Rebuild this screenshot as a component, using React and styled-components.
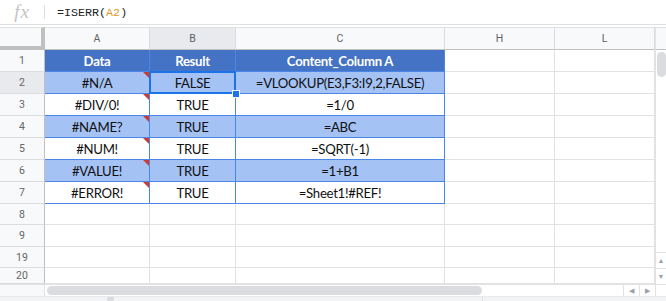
import React from "react";
import styled, { createGlobalStyle, css } from "styled-components";

const Global = createGlobalStyle`
  html, body { margin: 0; padding: 0; background: #fff; }
  body { width: 666px; height: 301px; overflow: hidden; }
`;

const COLS = [105, 86, 209, 110, 100];
const COL_LABELS = ["A", "B", "C", "H", "L"];
const ROW_H = [22, 22, 22, 22, 22, 22, 22, 21, 22, 21, 16];
const ROW_LABELS = ["1", "2", "3", "4", "5", "6", "7", "8", "9", "19", "20"];

const TABLE = [
  ["#N/A", "FALSE", "=VLOOKUP(E3,F3:I9,2,FALSE)"],
  ["#DIV/0!", "TRUE", "=1/0"],
  ["#NAME?", "TRUE", "=ABC"],
  ["#NUM!", "TRUE", "=SQRT(-1)"],
  ["#VALUE!", "TRUE", "=1+B1"],
  ["#ERROR!", "TRUE", "=Sheet1!#REF!"],
];

const Page = styled.div`
  width: 666px;
  height: 301px;
  display: flex;
  flex-direction: column;
  overflow: hidden;
  background: #fff;
  font-family: "Liberation Sans", Arial, sans-serif;
`;

const FormulaBar = styled.div`
  height: 24px;
  flex: none;
  display: flex;
  align-items: center;
  border-bottom: 1px solid #e0e0e0;
`;

const FxBox = styled.div`
  width: 44px;
  height: 14px;
  display: flex;
  align-items: center;
  justify-content: center;
  border-right: 1px solid #dadce0;
  font-family: "Liberation Serif", "Times New Roman", serif;
  font-style: italic;
  font-size: 19px;
  color: #c4c4c4;
  letter-spacing: 1px;
`;

const FormulaText = styled.div`
  padding-left: 12px;
  font-family: "Liberation Mono", "DejaVu Sans Mono", monospace;
  font-size: 11.7px;
  color: #222;
  padding-top: 1px;
`;

const Ref = styled.span`
  color: #e69a28;
`;

const Gap = styled.div`
  height: 2px;
  flex: none;
`;

const Body = styled.div`
  display: flex;
  flex: none;
  height: 257px;
`;

const Grid = styled.div`
  display: grid;
  grid-template-columns: 45px ${COLS.map((c) => c + "px").join(" ")};
  grid-template-rows: 23px ${ROW_H.map((r) => r + "px").join(" ")};
  width: 655px;
  overflow: hidden;
`;

const Corner = styled.div`
  background: #f8f9fa;
  border-top: 1px solid #e2e2e2;
  border-right: 4px solid #c0c0c0;
  border-bottom: 4px solid #c0c0c0;
  box-sizing: border-box;
`;

const ColHeader = styled.div`
  background: ${(p) => (p.$selected ? "#e8eaed" : "#f8f9fa")};
  border-top: 1px solid #e2e2e2;
  border-right: 1px solid #dadce0;
  border-bottom: 1px solid #c0c0c0;
  box-sizing: border-box;
  display: flex;
  align-items: center;
  justify-content: center;
  font-family: Roboto, "Liberation Sans", sans-serif;
  font-size: 10.5px;
  color: #5f6368;
`;

const RowHeader = styled.div`
  background: ${(p) => (p.$selected ? "#e8eaed" : "#f8f9fa")};
  border-right: 1px solid #c0c0c0;
  border-bottom: 1px solid #dadce0;
  box-sizing: border-box;
  display: flex;
  align-items: center;
  justify-content: center;
  font-family: Roboto, "Liberation Sans", sans-serif;
  font-size: 10.5px;
  color: #666;
`;

const variants = {
  head: css`
    background: #4472c4;
    color: #fff;
    font-weight: 700;
    border-right: 1px solid #4a86e8;
    border-bottom: 1px solid #4a86e8;
  `,
  band: css`
    background: #a4c2f4;
    color: #111;
    border-right: 1px solid #4a86e8;
    border-bottom: 1px solid #4a86e8;
  `,
  plain: css`
    background: #fff;
    color: #111;
    border-right: 1px solid #4a86e8;
    border-bottom: 1px solid #4a86e8;
  `,
  empty: css`
    background: #fff;
    border-right: 1px solid #e2e2e2;
    border-bottom: 1px solid #e2e2e2;
  `,
};

const Cell = styled.div`
  position: relative;
  box-sizing: border-box;
  display: flex;
  align-items: center;
  justify-content: center;
  font-family: Lato, "Open Sans", sans-serif;
  font-size: 13.2px;
  letter-spacing: -0.3px;
  white-space: nowrap;
  padding-top: 1px;
  ${(p) => variants[p.$variant]}
`;

const ErrorMark = styled.span`
  position: absolute;
  top: 0;
  right: 0;
  width: 0;
  height: 0;
  border-top: 6px solid #cc3b2f;
  border-left: 6px solid transparent;
`;

const Selection = styled.span`
  position: absolute;
  left: -1px;
  top: -1px;
  right: -1px;
  bottom: -1px;
  border: 2px solid #1a73e8;
  pointer-events: none;
`;

const Handle = styled.span`
  position: absolute;
  right: -5px;
  bottom: -5px;
  width: 6px;
  height: 6px;
  background: #1a73e8;
  border: 1px solid #fff;
  z-index: 2;
`;

const VScroll = styled.div`
  width: 11px;
  display: flex;
  flex-direction: column;
  border-left: 1px solid #e2e2e2;
  box-sizing: border-box;
`;

const VScrollHead = styled.div`
  height: 23px;
  flex: none;
  background: #f8f9fa;
  border-top: 1px solid #e2e2e2;
  border-bottom: 1px solid #c0c0c0;
  box-sizing: border-box;
`;

const VTrack = styled.div`
  flex: 1;
  padding: 2px 0 0 1px;
`;

const VThumb = styled.div`
  width: 9px;
  height: 25px;
  border-radius: 5px;
  background: #dadce0;
`;

const Arrow = styled.div`
  flex: none;
  display: flex;
  align-items: center;
  justify-content: center;
  font-size: 7px;
  color: #9aa0a6;
  box-sizing: border-box;
  ${(p) =>
    p.$vertical
      ? css`
          height: 16px;
          border-top: 1px solid #e2e2e2;
        `
      : css`
          width: 16px;
          border-left: 1px solid #e2e2e2;
        `}
`;

const HScroll = styled.div`
  height: 12px;
  flex: none;
  display: flex;
  border-top: 1px solid #e2e2e2;
  box-sizing: border-box;
`;

const HLeft = styled.div`
  width: 45px;
  background: #f8f9fa;
  border-right: 1px solid #e2e2e2;
  box-sizing: border-box;
`;

const HTrack = styled.div`
  flex: 1;
  display: flex;
  align-items: center;
  padding-left: 2px;
`;

const HThumb = styled.div`
  width: 435px;
  height: 9px;
  border-radius: 5px;
  background: #dadce0;
`;

const HCorner = styled.div`
  width: 11px;
  border-left: 1px solid #e2e2e2;
  box-sizing: border-box;
  background: #fff;
`;

const BottomStrip = styled.div`
  flex: 1;
  display: flex;
  background: #f1f3f4;
  border-top: 1px solid #e8eaed;
`;

const StripPart = styled.div`
  width: ${(p) => p.$w}px;
  background: ${(p) => p.$bg};
  border-right: 1px solid #e0e0e0;
`;

export default function App() {
  const rows = [];
  ROW_LABELS.forEach((label, ri) => {
    rows.push(
      <RowHeader key={"rh" + ri} $selected={ri === 1}>
        {label}
      </RowHeader>
    );
    COLS.forEach((_, ci) => {
      let variant = "empty";
      let content = null;
      if (ri < 7 && ci < 3) {
        if (ri === 0) {
          variant = "head";
          content = ["Data", "Result", "Content_Column A"][ci];
        } else {
          variant = ri % 2 === 1 ? "band" : "plain";
          content = TABLE[ri - 1][ci];
        }
      }
      rows.push(
        <Cell key={ri + "-" + ci} $variant={variant}>
          {content}
          {ri >= 1 && ri < 7 && ci === 0 && <ErrorMark />}
          {ri === 1 && ci === 1 && (
            <>
              <Selection />
              <Handle />
            </>
          )}
        </Cell>
      );
    });
  });

  return (
    <Page>
      <Global />
      <FormulaBar>
        <FxBox>fx</FxBox>
        <FormulaText>
          =ISERR(<Ref>A2</Ref>)
        </FormulaText>
      </FormulaBar>
      <Gap />
      <Body>
        <Grid>
          <Corner />
          {COL_LABELS.map((c, i) => (
            <ColHeader key={c} $selected={i === 1}>
              {c}
            </ColHeader>
          ))}
          {rows}
        </Grid>
        <VScroll>
          <VScrollHead />
          <VTrack>
            <VThumb />
          </VTrack>
          <Arrow $vertical>▲</Arrow>
          <Arrow $vertical>▼</Arrow>
        </VScroll>
      </Body>
      <HScroll>
        <HLeft />
        <HTrack>
          <HThumb />
        </HTrack>
        <Arrow>◀</Arrow>
        <Arrow>▶</Arrow>
        <HCorner />
      </HScroll>
      <BottomStrip>
        <StripPart $w={107} $bg="#f1f3f4" />
        <StripPart $w={5} $bg="#dadce0" />
        <StripPart $w={368} $bg="#f1f3f4" />
      </BottomStrip>
    </Page>
  );
}
